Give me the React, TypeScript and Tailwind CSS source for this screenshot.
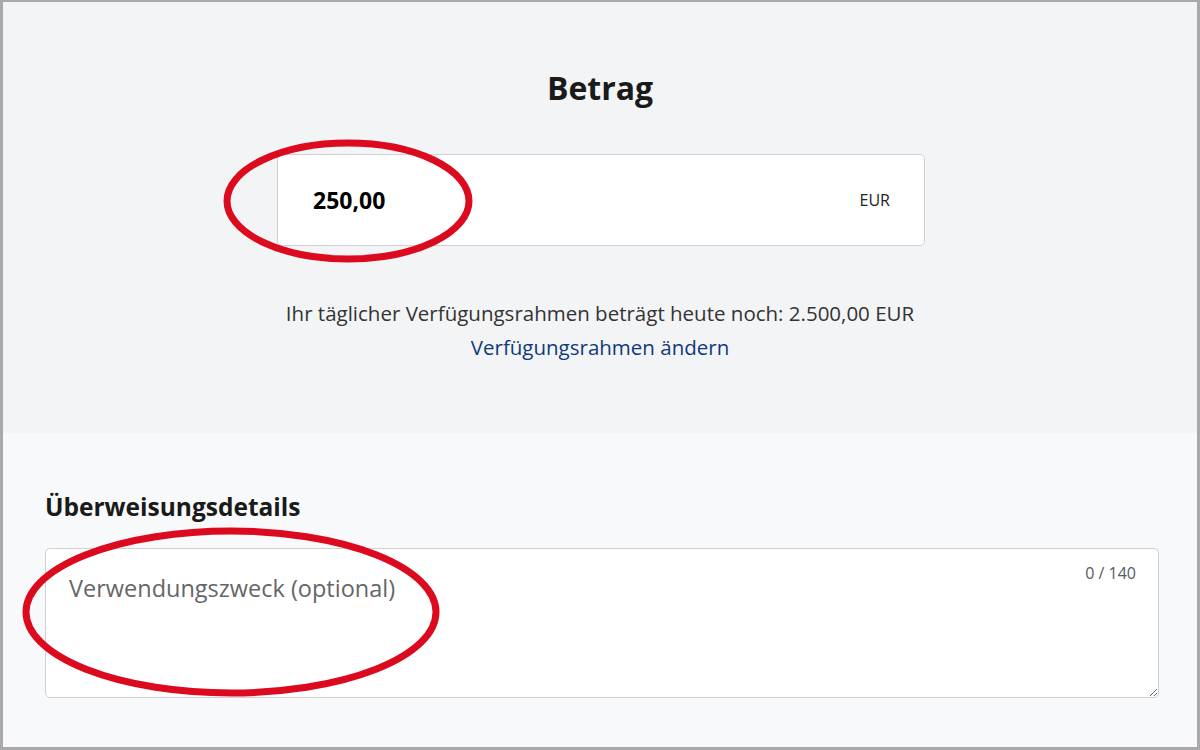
import React from 'react';

const font = { fontFamily: '"Open Sans", "Noto Sans", Arial, sans-serif' };

const App: React.FC = () => {
  return (
    <div className="relative w-[1200px] h-[750px] overflow-hidden bg-white" style={font}>
      <div className="flex flex-col h-full border-t-2 border-l-[3px] border-r-[3px] border-b-[3px] border-[#a9a9ab]">
        {/* Betrag */}
        <section className="h-[431px] bg-[#f3f4f6] flex flex-col items-center pt-[64px]">
          <h1 className="text-[32px] leading-[44px] font-bold text-[#1a1a1a]">Betrag</h1>
          <div className="mt-[44px] ml-[2px] w-[648px] h-[92px] bg-white border border-[#cfd0d2] rounded-[5px] flex items-center justify-between pl-[35px] pr-[34px]">
            <span className="text-[23px] font-bold text-black">250,00</span>
            <span className="text-[16px] text-[#222]">EUR</span>
          </div>
          <p className="mt-[54px] text-[20.5px] leading-[26px] text-[#333]">
            Ihr täglicher Verfügungsrahmen beträgt heute noch: 2.500,00 EUR
          </p>
          <a className="mt-[8px] text-[20.5px] leading-[26px] text-[#103a7c]">Verfügungsrahmen ändern</a>
        </section>

        {/* Überweisungsdetails */}
        <section className="flex-1 bg-[#f8f9fb] px-[42px] pt-[58px]">
          <h2 className="text-[24.5px] leading-[32px] font-bold text-[#1a1a1a]">Überweisungsdetails</h2>
          <div className="relative mt-[25px]">
            <textarea
              readOnly
              placeholder="Verwendungszweck (optional)"
              className="block w-[1114px] h-[150px] bg-white border border-[#cfd0d2] rounded-[5px] pl-[23px] pt-[24px] text-[23.5px] leading-[30px] text-[#333] placeholder:text-[#666] outline-none resize-y"
            />
            <span className="absolute right-[19px] top-[13px] text-[16px] text-[#555a60]">0 / 140</span>
          </div>
        </section>
      </div>

      {/* Annotation circles */}
      <svg className="absolute inset-0 pointer-events-none" width="1200" height="750" viewBox="0 0 1200 750">
        <ellipse cx="348" cy="201" rx="121" ry="58" fill="none" stroke="#dc0a1e" strokeWidth="7" />
        <ellipse cx="231" cy="612" rx="205" ry="81" fill="none" stroke="#dc0a1e" strokeWidth="7" />
      </svg>
    </div>
  );
};

export default App;
